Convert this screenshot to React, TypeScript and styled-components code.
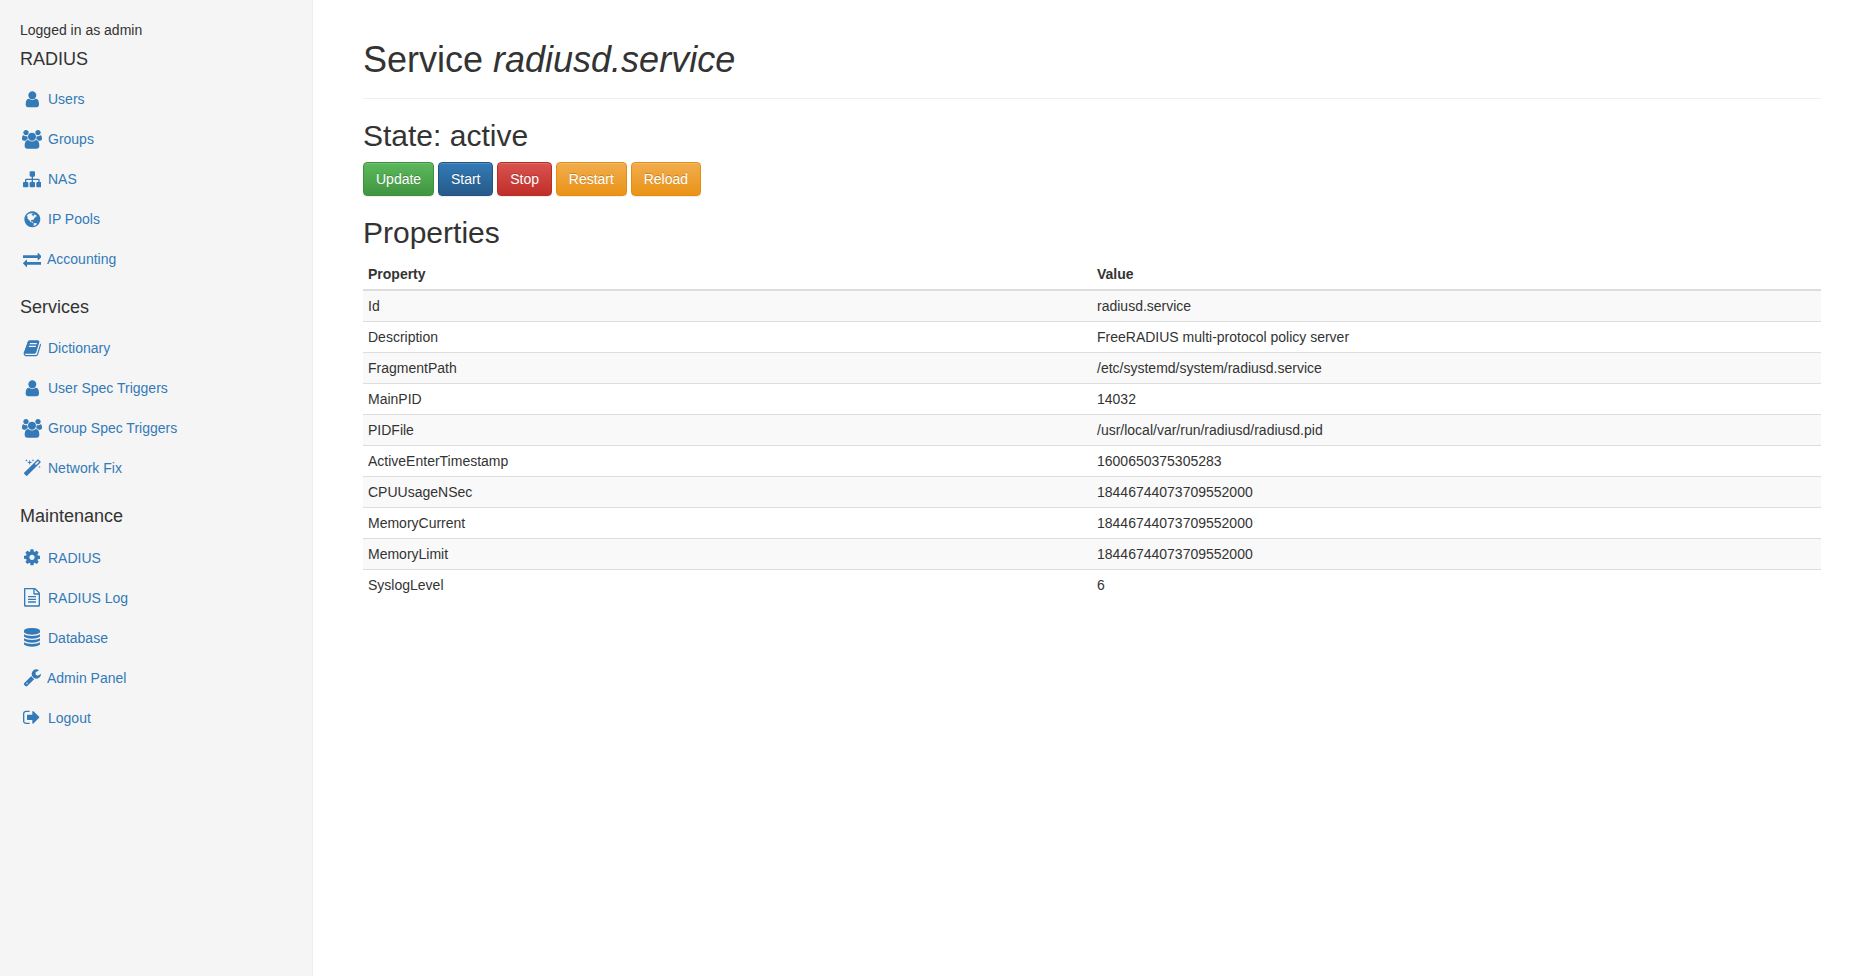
import * as React from "react";
import { createGlobalStyle, styled } from "styled-components";

const GlobalStyle = createGlobalStyle`
    * {
        box-sizing: border-box;
    }

    body {
        margin: 0;
        font-family: "Liberation Sans", Arial, sans-serif;
        font-size: 14px;
        line-height: 20px;
        color: #333;
        background: #fff;
    }
`;

interface IconShape {
    width: number;
    d: string;
}

const icons: Record<string, IconShape> = {
    user: {
        width: 1792,
        d: "M1536 1399q0 109-62.500 187t-150.500 78h-854q-88 0-150.500-78t-62.500-187q0-85 8.500-160.500t31.500-151.500 58.500-130 94-88.500 134.500-34.500q131 128 313 128t313-128q76 0 134.500 34.500t94 88.500 58.500 130 31.500 151.500 8.500 160.500zm-256-887q0 159-112.500 271.500t-271.500 112.500-271.500-112.500-112.500-271.500 112.500-271.500 271.500-112.500 271.500 112.500 112.500 271.500z",
    },
    users: {
        width: 1920,
        d: "M593 896q-162 5-265 128h-134q-82 0-138-40.500t-56-118.500q0-353 124-353 6 0 43.500 21t97.500 42.500 119 21.500q67 0 133-23-5 37-5 66 0 139 81 256zm1071 637q0 120-73 189.500t-194 69.500h-874q-121 0-194-69.500t-73-189.500q0-53 3.500-103.500t14-109 26.500-108.500 43-97.500 62-81 85.500-53.500 111.500-20q10 0 43 21.500t73 48 107 48 135 21.500 135-21.500 107-48 73-48 43-21.500q61 0 111.500 20t85.500 53.500 62 81 43 97.500 26.500 108.500 14 109 3.500 103.500zm-1024-1277q0 106-75 181t-181 75-181-75-75-181 75-181 181-75 181 75 75 181zm704 384q0 159-112.500 271.500t-271.500 112.500-271.500-112.500-112.500-271.500 112.500-271.500 271.500-112.500 271.500 112.500 112.500 271.500zm576 225q0 78-56 118.500t-138 40.500h-134q-103-123-265-128 81-117 81-256 0-29-5-66 66 23 133 23 59 0 119-21.500t97.500-42.500 43.500-21q124 0 124 353zm-128-609q0 106-75 181t-181 75-181-75-75-181 75-181 181-75 181 75 75 181z",
    },
    sitemap: {
        width: 1792,
        d: "M1792 1248v320q0 40-28 68t-68 28h-320q-40 0-68-28t-28-68v-320q0-40 28-68t68-28h96v-192h-512v192h96q40 0 68 28t28 68v320q0 40-28 68t-68 28h-320q-40 0-68-28t-28-68v-320q0-40 28-68t68-28h96v-192h-512v192h96q40 0 68 28t28 68v320q0 40-28 68t-68 28h-320q-40 0-68-28t-28-68v-320q0-40 28-68t68-28h96v-192q0-52 38-90t90-38h512v-192h-96q-40 0-68-28t-28-68v-320q0-40 28-68t68-28h320q40 0 68 28t28 68v320q0 40-28 68t-68 28h-96v192h512q52 0 90 38t38 90v192h96q40 0 68 28t28 68z",
    },
    globe: {
        width: 1792,
        d: "M896 128q209 0 385.500 103t279.500 279.500 103 385.500-103 385.500-279.500 279.500-385.500 103-385.500-103-279.500-279.500-103-385.500 103-385.500 279.500-279.500 385.500-103zm274 521q-2 1-9.500 9.500t-13.500 9.500q2 0 4.500-5t5-11 3.500-7q6-7 22-15 14-6 52-12 34-8 51 11-2-2 9.500-13t14.500-12q3-2 15-4.500t15-7.500l2-22q-12 1-17.500-7t-6.500-21q0 2-6 8 0-7-4.500-8t-11.500 1-9 1q-10-3-15-7.500t-8-16.500-4-15q-2-5-9.500-10.500t-9.500-10.500q-1-2-2.500-5.500t-3-6.500-4-5.500-5.500-2.500-7 5-7.500 10-4.500 5q-3-2-6-1.500t-4.500 1-4.500 3-5 3.500q-3 2-8.500 3t-8.500 2q15-5-1-11-10-4-16-3 9-4 7.500-12t-8.500-14h5q-1-4-8.500-8.500t-17.500-8.500-13-6q-8-5-34-9.500t-33-.5q-5 6-4.500 10.500t4 14 3.500 12.500q1 6-5.500 13t-6.500 12q0 7 14 15.500t10 21.500q-3 8-16 16t-16 12q-5 8-1.500 18.500t10.500 16.500q2 2 1.500 4t-3.500 4.500-5.500 4-6.500 3.500l-3 2q-11 5-20.500-6t-13.500-26q-7-25-16-30-23-8-29 1-5-13-41-26-25-9-58-4 6-1 0-15-7-15-19-12 3-6 4-17.500t1-13.500q3-13 12-23 1-1 7-8.500t9.500-13.500.5-6q35 4 50-11 5-5 11.500-17t10.500-17q9-6 14-5.500t14.500 5.500 14.500 5q14 1 15.500-11t-7.500-20q12 1 3-17-4-7-8-9-12-4-27 5-8 4 2 8-1-1-9.500 10.500t-16.500 17.500-16-5q-1-1-5.500-13.500t-9.500-13.500q-8 0-16 15 3-8-11-15t-24-8q19-12-8-27-7-4-20.500-5t-19.500 4q-5 7-5.500 11.500t5 8 10.500 5.500 11.500 4 8.500 3q14 10 8 14-2 1-8.500 3.500t-11.500 4.500-6 4q-3 4 0 14t-2 14q-5-5-9-17.500t-7-16.500q7 9-25 6l-10-1q-4 0-16 2t-20.500 1-13.500-8q-4-8 0-20 1-4 4-2-4-3-11-9.500t-10-8.500q-46 15-94 41 6 1 12-1 5-2 13-6.500t10-5.500q34-14 42-7l5-5q14 16 20 25-7-4-30-1-20 6-22 12 7 12 5 18-4-3-11.500-10t-14.500-11-15-5q-16 0-22 1-146 80-235 222 7 7 12 8 4 1 5 9t2.500 11 11.500-3q9 8 3 19 1-1 44 27 19 17 21 21 3 11-10 18-1-2-9-9t-9-4q-3 5 .5 18.500t10.500 12.500q-7 0-9.500 16t-2.500 35.500-1 23.500l2 1q-3 12 5.500 34.500t21.500 19.500q-13 3 20 43 6 8 8 9 3 2 12 7.500t15 10 10 10.500q4 5 10 22.500t14 23.500q-2 6 9.500 20t10.500 23q-1 0-2.500 1t-2.500 1q3 7 15.500 14t15.500 13q1 3 2 10t3 11 8 2q2-20-24-62-15-25-17-29-3-5-5.500-15.500t-4.500-14.500q2 0 6 1.500t8.500 3.500 7.500 4 2 3q-3 7 2 17.500t12 18.500 17 19 12 13q6 6 14 19.500t0 13.500q9 0 20 10.500t17 19.500q5 8 8 26t5 24q2 7 8.500 13.500t12.500 9.500l16 8 13 7q5 2 18.500 10.500t21.500 11.500q10 4 16 4t14.500-2.500 13.500-3.500q15-2 29 15t21 21q36 19 55 11-2 1 .5 7.500t8 15.500 9 14.500 5.500 8.500q5 6 18 15t18 15q6-4 7-9-3 8 7 20t18 10q14-3 14-32-31 15-49-18 0-1-2.500-5.500t-4-8.500-2.500-8.500 0-7.500 5-3q9 0 10-3.500t-2-12.500-4-13q-1-8-11-20t-12-15q-5 9-16 8t-16-9q0 1-1.500 5.500t-1.500 6.500q-13 0-15-1 1-3 2.500-17.500t3.500-22.500q1-4 5.500-12t7.500-14.500 4-12.500-4.500-9.500-17.500-2.500q-19 1-26 20-1 3-3 10.500t-5 11.500-9 7q-7 3-24 2t-24-5q-13-8-22.500-29t-9.500-37q0-10 2.500-26.500t3-25-5.500-24.500q3-2 9-9.500t10-10.500q2-1 4.500-1.500t4.500 0 4-1.500 3-6q-1-1-4-3-3-3-4-3 7 3 28.500-1.500t27.500 1.500q15 11 22-2 0-1-2.500-9.500t-.5-13.500q5 27 29 9 3 3 15.500 5t17.500 5q3 2 7 5.500t5.500 4.500 5-.5 8.500-6.500q10 14 12 24 11 40 19 44 7 3 11 2t4.500-9.500 0-14-1.500-12.500l-1-8v-18l-1-8q-15-3-18.500-12t1.500-18.500 15-18.500q1-1 8-3.500t15.500-6.500 12.500-8q21-19 15-35 7 0 11-9-1 0-5-3t-7.500-5-4.500-2q9-5 2-16 5-3 7.500-11t7.500-10q9 12 21 2 8-8 1-16 5-7 20.500-10.500t18.500-9.500q7 2 8-2t1-12 3-12q4-5 15-9t13-5l17-11q3-4 0-4 18 2 31-11 10-11-6-20 3-6-3-9.500t-15-5.500q3-1 11.500-.5t10.500-1.500q15-10-7-16-17-5-43 12zm-163 877q206-36 351-189-3-3-12.500-4.500t-12.500-3.500q-18-7-24-8 1-7-2.500-13t-8-9-12.500-8-11-7q-2-2-7-6t-7-5.500-7.500-4.500-8.500-2-10 1l-3 1q-3 1-5.500 2.500t-5.500 3-4 3 0 2.500q-21-17-36-22-5-1-11-5.500t-10.500-7-10-1.500-11.500 7q-5 5-6 15t-2 13q-7-5 0-17.500t2-18.500q-3-6-10.500-4.500t-12 4.500-11.500 8.500-9 6.500-8.500 5.500-8.500 7.500q-3 4-6 12t-5 11q-2-4-11.500-6.500t-9.500-5.500q2 10 4 35t5 38q7 31-12 48-27 25-29 40-4 22 12 26 0 7-8 20.500t-7 21.500q0 6 2 16z",
    },
    exchange: {
        width: 1792,
        d: "M1792 1184v192q0 13-9.500 22.500t-22.500 9.500h-1376v192q0 13-9.500 22.500t-22.500 9.500q-12 0-24-10l-319-320q-9-9-9-22 0-14 9-23l320-320q9-9 23-9 13 0 22.500 9.500t9.500 22.500v192h1376q13 0 22.500 9.500t9.500 22.500zm0-544q0 14-9 23l-320 320q-9 9-23 9-13 0-22.500-9.500t-9.500-22.500v-192h-1376q-13 0-22.500-9.500t-9.500-22.500v-192q0-13 9.500-22.500t22.500-9.500h1376v-192q0-14 9-23t23-9q12 0 24 10l319 319q9 9 9 23z",
    },
    book: {
        width: 1792,
        d: "M1703 478q40 57 18 129l-275 906q-19 64-76.500 107.500t-122.500 43.500h-923q-77 0-148.500-53.500t-99.500-131.500q-24-67-2-127 0-4 3-27t4-37q1-8-3-21.500t-3-19.500q2-11 8-21t16.500-23.500 16.500-23.500q23-38 45-91.500t30-91.500q3-10 .5-30t-.5-28q3-11 17-28t17-23q21-36 42-92t25-90q1-9-2.500-32t.5-28q4-13 22-30.500t22-22.500q19-26 42.500-84.500t27.500-96.500q1-8-3-25.500t-2-26.500q2-8 9-18t18-23 17-21q8-12 16.500-30.500t15-35 16-36 19.500-32 26.500-23.500 36-11.500 47.500 5.500l-1 3q38-9 51-9h761q74 0 114 56t18 130l-274 906q-36 119-71.500 153.500t-128.500 34.500h-869q-27 0-38 15-11 16-1 43 24 70 144 70h923q29 0 56-15.500t35-41.500l300-987q7-22 5-57 38 15 59 43zm-1064 2q-4 13 2 22.500t20 9.500h608q13 0 25.500-9.500t16.500-22.500l21-64q4-13-2-22.500t-20-9.500h-608q-13 0-25.500 9.500t-16.500 22.500zm-83 256q-4 13 2 22.500t20 9.500h608q13 0 25.500-9.500t16.500-22.500l21-64q4-13-2-22.500t-20-9.500h-608q-13 0-25.500 9.500t-16.500 22.500z",
    },
    magic: {
        width: 1792,
        d: "M1254 581l293-293-107-107-293 293zm447-293q0 27-18 45l-1286 1286q-18 18-45 18t-45-18l-198-198q-18-18-18-45t18-45l1286-1286q18-18 45-18t45 18l198 198q18 18 18 45zm-1351-190l98 30-98 30-30 98-30-98-98-30 98-30 30-98zm350 162l196 60-196 60-60 196-60-196-196-60 196-60 60-196zm930 478l98 30-98 30-30 98-30-98-98-30 98-30 30-98zm-640-640l98 30-98 30-30 98-30-98-98-30 98-30 30-98z",
    },
    cog: {
        width: 1536,
        d: "M1024 896q0-106-75-181t-181-75-181 75-75 181 75 181 181 75 181-75 75-181zm512-109v222q0 12-8 23t-20 13l-185 28q-19 54-39 91 35 50 107 138 10 12 10 25t-9 23q-27 37-99 108t-94 71q-12 0-26-9l-138-108q-44 23-91 38-16 136-29 186-7 28-36 28h-222q-14 0-24.500-8.500t-11.500-21.500l-28-184q-49-16-90-37l-141 107q-10 9-25 9-14 0-25-11-126-114-165-168-7-10-7-23 0-12 8-23 15-21 51-66.500t54-70.500q-27-50-41-99l-183-27q-13-2-21-12.500t-8-23.500v-222q0-12 8-23t19-13l186-28q14-46 39-92-40-57-107-138-10-12-10-24 0-10 9-23 26-36 98.500-107.500t94.500-71.500q13 0 26 10l138 107q44-23 91-38 16-136 29-186 7-28 36-28h222q14 0 24.500 8.500t11.500 21.500l28 184q49 16 90 37l142-107q9-9 24-9 13 0 25 10 129 119 165 170 7 8 7 22 0 12-8 23-15 21-51 66.500t-54 70.500q26 50 41 98l183 28q13 2 21 12.500t8 23.500z",
    },
    file: {
        width: 1536,
        d: "M1468 380q28 28 48 76t20 88v1152q0 40-28 68t-68 28h-1344q-40 0-68-28t-28-68v-1600q0-40 28-68t68-28h896q40 0 88 20t76 48zm-444-244v376h376q-10-29-22-41l-313-313q-12-12-41-22zm384 1528v-1024h-416q-40 0-68-28t-28-68v-416h-768v1536h1280zm-1024-864q0-14 9-23t23-9h704q14 0 23 9t9 23v64q0 14-9 23t-23 9h-704q-14 0-23-9t-9-23v-64zm736 224q14 0 23 9t9 23v64q0 14-9 23t-23 9h-704q-14 0-23-9t-9-23v-64q0-14 9-23t23-9h704zm0 256q14 0 23 9t9 23v64q0 14-9 23t-23 9h-704q-14 0-23-9t-9-23v-64q0-14 9-23t23-9h704z",
    },
    database: {
        width: 1536,
        d: "M768 768q237 0 443-43t325-127v170q0 69-103 128t-280 93.500-385 34.500-385-34.500-280-93.500-103-128v-170q119 84 325 127t443 43zm0 768q237 0 443-43t325-127v170q0 69-103 128t-280 93.500-385 34.500-385-34.500-280-93.500-103-128v-170q119 84 325 127t443 43zm0-384q237 0 443-43t325-127v170q0 69-103 128t-280 93.500-385 34.500-385-34.500-280-93.500-103-128v-170q119 84 325 127t443 43zm0-1152q208 0 385 34.500t280 93.500 103 128v128q0 69-103 128t-280 93.500-385 34.500-385-34.500-280-93.500-103-128v-128q0-69 103-128t280-93.500 385-34.500z",
    },
    wrench: {
        width: 1792,
        d: "M448 1472q0-26-19-45t-45-19-45 19-19 45 19 45 45 19 45-19 19-45zm644-420l-682 682q-37 37-90 37-52 0-91-37l-106-108q-38-36-38-90 0-53 38-91l681-681q39 98 114.500 173.500t173.500 114.500zm634-435q0 39-23 106-47 134-164.500 217.500t-258.500 83.500q-185 0-316.500-131.500t-131.500-316.500 131.500-316.500 316.500-131.500q58 0 121.500 16.500t107.500 46.500q16 11 16 28t-16 28l-293 169v224l193 107q5-3 79-48.500t135.500-81 70.500-35.500q15 0 23.500 10t8.500 25z",
    },
    signOut: {
        width: 1664,
        d: "M640 1440q0 4 1 20t.5 26.500-3 23.500-10 19.500-20.500 6.500h-320q-119 0-203.500-84.500t-84.500-203.500v-704q0-119 84.500-203.500t203.500-84.500h320q13 0 22.500 9.500t9.500 22.500q0 4 1 20t.5 26.500-3 23.500-10 19.500-20.500 6.500h-320q-66 0-113 47t-47 113v704q0 66 47 113t113 47h312l11.500 1 11.500 3 8 5.500 7 9 2 13.500zm928-544q0 26-19 45l-544 544q-19 19-45 19t-45-19-19-45v-288h-448q-26 0-45-19t-19-45v-384q0-26 19-45t45-19h448v-288q0-26 19-45t45-19 45 19l544 544q19 19 19 45z",
    },
};

interface NavItem {
    icon: string;
    label: string;
    tight?: boolean;
}

interface NavGroup {
    title: string;
    items: NavItem[];
}

const groups: NavGroup[] = [
    {
        title: "RADIUS",
        items: [
            { icon: "user", label: "Users" },
            { icon: "users", label: "Groups" },
            { icon: "sitemap", label: "NAS" },
            { icon: "globe", label: "IP Pools" },
            { icon: "exchange", label: "Accounting", tight: true },
        ],
    },
    {
        title: "Services",
        items: [
            { icon: "book", label: "Dictionary" },
            { icon: "user", label: "User Spec Triggers" },
            { icon: "users", label: "Group Spec Triggers" },
            { icon: "magic", label: "Network Fix" },
        ],
    },
    {
        title: "Maintenance",
        items: [
            { icon: "cog", label: "RADIUS" },
            { icon: "file", label: "RADIUS Log" },
            { icon: "database", label: "Database" },
            { icon: "wrench", label: "Admin Panel", tight: true },
            { icon: "signOut", label: "Logout" },
        ],
    },
];

const actions = [
    { label: "Update", top: "#5cb85c", bottom: "#419641", border: "#3e8f3e" },
    { label: "Start", top: "#337ab7", bottom: "#265a88", border: "#245580" },
    { label: "Stop", top: "#d9534f", bottom: "#c12e2a", border: "#b92c28" },
    { label: "Restart", top: "#f0ad4e", bottom: "#eb9316", border: "#e38d13" },
    { label: "Reload", top: "#f0ad4e", bottom: "#eb9316", border: "#e38d13" },
];

const properties = [
    ["Id", "radiusd.service"],
    ["Description", "FreeRADIUS multi-protocol policy server"],
    ["FragmentPath", "/etc/systemd/system/radiusd.service"],
    ["MainPID", "14032"],
    ["PIDFile", "/usr/local/var/run/radiusd/radiusd.pid"],
    ["ActiveEnterTimestamp", "1600650375305283"],
    ["CPUUsageNSec", "18446744073709552000"],
    ["MemoryCurrent", "18446744073709552000"],
    ["MemoryLimit", "18446744073709552000"],
    ["SyslogLevel", "6"],
];

function FaIcon({ name }: { name: string }) {
    const shape = icons[name];
    return (
        <IconBox>
            <svg
                viewBox={`0 0 ${shape.width} 1792`}
                width={(shape.width / 1792) * 18.67}
                height={18.67}
                fill="currentColor"
            >
                <path d={shape.d} />
            </svg>
        </IconBox>
    );
}

export default function App() {
    return (
        <>
            <GlobalStyle />
            <Page>
                <Sidebar>
                    <LoggedIn>Logged in as admin</LoggedIn>
                    {groups.map((group, index) => (
                        <section key={group.title}>
                            <GroupTitle $first={index === 0}>{group.title}</GroupTitle>
                            <NavList>
                                {group.items.map((item) => (
                                    <li key={group.title + item.label}>
                                        <NavLink href="#" $tight={item.tight}>
                                            <FaIcon name={item.icon} />
                                            {item.label}
                                        </NavLink>
                                    </li>
                                ))}
                            </NavList>
                        </section>
                    ))}
                </Sidebar>
                <Main>
                    <PageHeader>
                        <Title>
                            Service <em>radiusd.service</em>
                        </Title>
                    </PageHeader>
                    <SectionTitle>State: active</SectionTitle>
                    <Toolbar>
                        {actions.map((action) => (
                            <ActionButton
                                key={action.label}
                                $top={action.top}
                                $bottom={action.bottom}
                                $border={action.border}
                            >
                                {action.label}
                            </ActionButton>
                        ))}
                    </Toolbar>
                    <SectionTitle>Properties</SectionTitle>
                    <PropertyTable>
                        <thead>
                            <tr>
                                <HeadCell>Property</HeadCell>
                                <HeadCell>Value</HeadCell>
                            </tr>
                        </thead>
                        <tbody>
                            {properties.map(([name, value]) => (
                                <BodyRow key={name}>
                                    <BodyCell>{name}</BodyCell>
                                    <BodyCell>{value}</BodyCell>
                                </BodyRow>
                            ))}
                        </tbody>
                    </PropertyTable>
                </Main>
            </Page>
        </>
    );
}

const Page = styled.div`
    display: flex;
    min-height: 976px;
`;

const Sidebar = styled.nav`
    flex: 0 0 313px;
    padding: 20px 20px 0;
    background: #f5f5f5;
    border-right: 1px solid #eee;
`;

const LoggedIn = styled.div`
    line-height: 20px;
`;

const GroupTitle = styled.h4<{ $first?: boolean }>`
    margin: 10px 0 ${(props) => (props.$first ? 9.4 : 10.3)}px;
    font-size: 18px;
    font-weight: 500;
    line-height: 19.8px;
`;

const NavList = styled.ul`
    margin: 0 0 19.1px;
    padding: 0;
    list-style: none;
`;

const NavLink = styled.a<{ $tight?: boolean }>`
    display: flex;
    align-items: center;
    gap: ${(props) => (props.$tight ? 3 : 4)}px;
    height: 40px;
    color: #337ab7;
    text-decoration: none;
`;

const IconBox = styled.span`
    display: flex;
    justify-content: center;
    flex: 0 0 24px;
`;

const Main = styled.main`
    flex: 1;
    padding: 0 55px 0 50px;
`;

const PageHeader = styled.header`
    margin: 40px 0 20px;
    padding-bottom: 18px;
    border-bottom: 1px solid #eee;
`;

const Title = styled.h1`
    margin: 0;
    font-size: 36px;
    font-weight: 500;
    line-height: 40px;
`;

const SectionTitle = styled.h2`
    margin: 0 0 10px;
    font-size: 30px;
    font-weight: 500;
    line-height: 33px;
`;

const Toolbar = styled.div`
    display: flex;
    gap: 3.75px;
    margin-bottom: 20px;
`;

const ActionButton = styled.button<{ $top: string; $bottom: string; $border: string }>`
    height: 34px;
    padding: 6px 12px;
    font: inherit;
    color: #fff;
    text-shadow: 0 -1px 0 rgba(0, 0, 0, 0.2);
    background: linear-gradient(to bottom, ${(props) => props.$top} 0%, ${(props) => props.$bottom} 100%);
    border: 1px solid ${(props) => props.$border};
    border-radius: 4px;
    box-shadow: inset 0 1px 0 rgba(255, 255, 255, 0.15), 0 1px 1px rgba(0, 0, 0, 0.075);
`;

const PropertyTable = styled.table`
    width: 100%;
    table-layout: fixed;
    border-collapse: collapse;
`;

const HeadCell = styled.th`
    padding: 5px;
    text-align: left;
    border-bottom: 2px solid #ddd;
`;

const BodyRow = styled.tr`
    &:nth-child(odd) {
        background: #f9f9f9;
    }
`;

const BodyCell = styled.td`
    padding: 5px;
    border-top: 1px solid #ddd;
`;
